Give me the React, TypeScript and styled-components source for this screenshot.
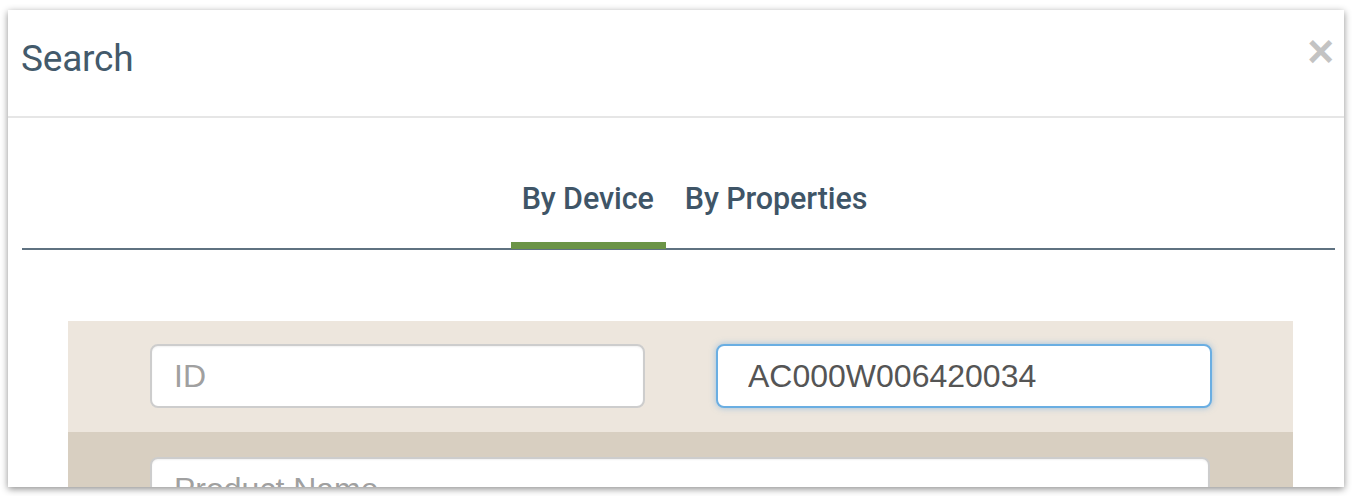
import React from "react";
import styled, { createGlobalStyle } from "styled-components";

const Global = createGlobalStyle`
  html, body { margin: 0; padding: 0; background: #ffffff; }
  body { font-family: Roboto, "Liberation Sans", sans-serif; }
  * { box-sizing: border-box; }
`;

const Page = styled.div`
  width: 1354px;
  height: 496px;
  padding: 10px 10px 0 8px;
  overflow: hidden;
`;

const Modal = styled.div`
  width: 1336px;
  height: 477px;
  background: #fff;
  box-shadow: 0 2px 7px rgba(0, 0, 0, 0.45);
  overflow: hidden;
  display: flex;
  flex-direction: column;
`;

const Header = styled.div`
  height: 108px;
  flex: none;
  display: flex;
  align-items: center;
  justify-content: space-between;
  padding: 0 10px 10px 13px;
  border-bottom: 2px solid #e6e6e6;
`;

const Title = styled.h1`
  margin: 0;
  font-family: Roboto, sans-serif;
  font-weight: 400;
  font-size: 37px;
  color: #435a6b;
  letter-spacing: -0.2px;
`;

const Close = styled.button`
  border: 0;
  background: none;
  padding: 0;
  margin-top: -14px;
  font-family: "Liberation Sans", sans-serif;
  font-weight: 700;
  font-size: 46px;
  line-height: 1;
  color: #c3c3c3;
  cursor: pointer;
`;

const Body = styled.div`
  padding: 0 9px 0 14px;
`;

const TabList = styled.div`
  display: flex;
  justify-content: center;
  gap: 8px;
  padding-left: 33px;
  padding-top: 63px;
  border-bottom: 2px solid #5f7281;
`;

const Tab = styled.div<{ $active?: boolean }>`
  font-family: Roboto, sans-serif;
  font-weight: 500;
  font-size: 30.5px;
  line-height: 36px;
  color: #3f5567;
  padding: 0 12px 25px 11px;
  border-bottom: 7px solid ${(p) => (p.$active ? "#6b9446" : "transparent")};
  margin-bottom: -1px;
  letter-spacing: -0.1px;
`;

const Form = styled.div`
  margin: 71px 42px 0 46px;
`;

const Row = styled.div<{ $dark?: boolean }>`
  display: grid;
  grid-template-columns: ${(p) => (p.$dark ? "1060px" : "495px 496px")};
  column-gap: 71px;
  padding: ${(p) => (p.$dark ? "25px 0 24px 82px" : "23px 0 24px 82px")};
  background: ${(p) => (p.$dark ? "#d8cfc1" : "#ede6dd")};
`;

const Input = styled.input<{ $focus?: boolean }>`
  width: 100%;
  height: 64px;
  border-radius: 8px;
  border: 2px solid ${(p) => (p.$focus ? "#6aaee2" : "#cdcdcd")};
  box-shadow: ${(p) =>
    p.$focus ? "0 0 6px rgba(90, 160, 220, 0.55)" : "inset 0 1px 2px rgba(0,0,0,0.06)"};
  background: #fff;
  padding: 0 22px 0 30px;
  font-family: "Liberation Sans", Arial, sans-serif;
  font-size: 32px;
  color: #555555;
  outline: none;
  &::placeholder { color: #a0a0a0; }
`;

const PlainInput = styled(Input)`
  padding-left: 22px;
`;

export default function App() {
  return (
    <>
      <Global />
      <Page>
        <Modal>
          <Header>
            <Title>Search</Title>
            <Close aria-label="Close">×</Close>
          </Header>
          <Body>
            <TabList>
              <Tab $active>By Device</Tab>
              <Tab>By Properties</Tab>
            </TabList>
            <Form>
              <Row>
                <PlainInput placeholder="ID" />
                <Input $focus defaultValue="AC000W006420034" />
              </Row>
              <Row $dark>
                <PlainInput placeholder="Product Name" />
              </Row>
            </Form>
          </Body>
        </Modal>
      </Page>
    </>
  );
}
